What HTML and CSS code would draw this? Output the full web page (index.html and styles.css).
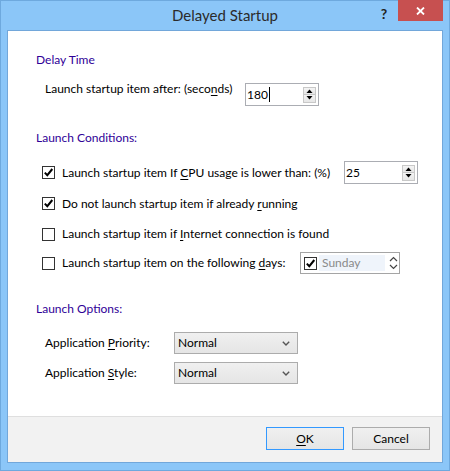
FILE: index.html
```html
<!DOCTYPE html>
<html>
<head>
<meta charset="utf-8">
<title>Delayed Startup</title>
<link rel="stylesheet" href="styles.css">
</head>
<body>
<div class="window">
  <div class="titlebar">
    <div></div>
    <div class="title">Delayed Startup</div>
    <div class="controls">
      <span class="help">?</span>
      <span class="close"><svg width="9" height="8" viewBox="0 0 9 8"><path d="M1 0.5 L8 7.5 M8 0.5 L1 7.5" stroke="#fff" stroke-width="1.8" fill="none"/></svg></span>
    </div>
  </div>
  <div class="client">
    <div class="content">
      <div class="heading">Delay Time</div>
      <div class="delay-row">
        <span class="label delay-label">Launch startup item after: (seco<u>n</u>ds)</span>
        <div class="spin">
          <span class="value">180<span class="caret"></span></span>
          <span class="spin-btns">
            <span class="sbtn"><svg width="7" height="4" viewBox="0 0 7 4"><path d="M0.5 4 L3.5 0.5 L6.5 4 Z" fill="#000"/></svg></span>
            <span class="sbtn"><svg width="7" height="4" viewBox="0 0 7 4"><path d="M0.5 0 L3.5 3.5 L6.5 0 Z" fill="#000"/></svg></span>
          </span>
        </div>
      </div>

      <div class="heading heading-cond">Launch Conditions:</div>
      <div class="conditions">
        <div class="crow">
          <span class="check-item cpu-item">
            <span class="cbox"><svg width="11" height="11" viewBox="0 0 11 11"><path d="M1.8 5.6 L4.3 8.2 L9.3 2" stroke="#000" stroke-width="2" fill="none"/></svg></span>
            <span class="label">Launch startup item If <u>C</u>PU usage is lower than: (%)</span>
          </span>
          <div class="spin">
            <span class="value">25</span>
            <span class="spin-btns">
              <span class="sbtn"><svg width="7" height="4" viewBox="0 0 7 4"><path d="M0.5 4 L3.5 0.5 L6.5 4 Z" fill="#000"/></svg></span>
              <span class="sbtn"><svg width="7" height="4" viewBox="0 0 7 4"><path d="M0.5 0 L3.5 3.5 L6.5 0 Z" fill="#000"/></svg></span>
            </span>
          </div>
        </div>
        <div class="crow">
          <span class="check-item">
            <span class="cbox"><svg width="11" height="11" viewBox="0 0 11 11"><path d="M1.8 5.6 L4.3 8.2 L9.3 2" stroke="#000" stroke-width="2" fill="none"/></svg></span>
            <span class="label">Do not launch startup item if already <u>r</u>unning</span>
          </span>
        </div>
        <div class="crow">
          <span class="check-item">
            <span class="cbox"></span>
            <span class="label">Launch startup item if <u>I</u>nternet connection is found</span>
          </span>
        </div>
        <div class="crow">
          <span class="check-item days-item">
            <span class="cbox"></span>
            <span class="label">Launch startup item on the following <u>d</u>ays:</span>
          </span>
          <div class="days">
            <span class="cbox small"><svg width="11" height="11" viewBox="0 0 11 11"><path d="M1.8 5.6 L4.3 8.2 L9.3 2" stroke="#000" stroke-width="2" fill="none"/></svg></span>
            <span class="day-name">Sunday</span>
            <span class="chev"><svg width="9" height="14" viewBox="0 0 9 14"><path d="M1 5 L4.5 1.5 L8 5 M1 9 L4.5 12.5 L8 9" stroke="#444" stroke-width="1.2" fill="none"/></svg></span>
          </div>
        </div>
      </div>

      <div class="heading heading-opt">Launch Options:</div>
      <div class="options">
        <span class="label">Application <u>P</u>riority:</span>
        <div class="combo"><span>Normal</span><svg width="8" height="5" viewBox="0 0 8 5"><path d="M0.8 0.8 L4 4 L7.2 0.8" stroke="#555" stroke-width="1.4" fill="none"/></svg></div>
        <span class="label">Application <u>S</u>tyle:</span>
        <div class="combo"><span>Normal</span><svg width="8" height="5" viewBox="0 0 8 5"><path d="M0.8 0.8 L4 4 L7.2 0.8" stroke="#555" stroke-width="1.4" fill="none"/></svg></div>
      </div>
    </div>
    <div class="footer">
      <button class="btn default"><u>O</u>K</button>
      <button class="btn">Cancel</button>
    </div>
  </div>
</div>
</body>
</html>
```

FILE: styles.css
```css
* { box-sizing: border-box; }
html, body { margin: 0; padding: 0; background: #fff; }
body { font-family: Lato, "Noto Sans", sans-serif; font-size: 12px; color: #000; }

.window {
  width: 450px;
  height: 471px;
  border: 1px solid #6ea9de;
  background: #8bc6f8;
  padding: 0 6px 7px 6px;
  display: flex;
  flex-direction: column;
}

.titlebar {
  height: 29px;
  flex: none;
  display: grid;
  grid-template-columns: 1fr auto 1fr;
}
.title {
  font-size: 15px;
  color: #2b2b2b;
  line-height: 29px;
}
.controls {
  justify-self: end;
  display: flex;
  align-items: flex-start;
}
.help {
  width: 26px;
  height: 22px;
  display: flex;
  align-items: center;
  justify-content: center;
  font-weight: bold;
  font-size: 14px;
  color: #222;
  padding-top: 2px;
  padding-right: 2px;
}
.close {
  margin-top: -1px;
  width: 45px;
  height: 21px;
  background: #c75050;
  display: flex;
  align-items: center;
  justify-content: center;
}

.client {
  flex: 1;
  border: 1px solid #72a7da;
  background: #fff;
  display: flex;
  flex-direction: column;
}
.content {
  flex: 1;
  padding: 21px 0 0 28px;
}
.heading {
  color: #2f0097;
  line-height: 16px;
}
.label { line-height: 16px; white-space: nowrap; }
u { text-decoration-thickness: 1px; text-underline-offset: 2px; }

.delay-row {
  margin-top: 12px;
  margin-left: 9px;
  display: flex;
  align-items: flex-start;
  height: 26px;
}
.delay-label { width: 200px; flex: none; padding-top: 1px; }
.delay-row .spin { margin-top: 3px; }

.spin {
  width: 74px;
  height: 23px;
  border: 1px solid #abadb3;
  display: flex;
  align-items: center;
  padding: 0 1px 0 1px;
  background: #fff;
  flex: none;
}
.value {
  flex: 1;
  display: flex;
  align-items: center;
  line-height: 16px;
}
.caret {
  display: inline-block;
  width: 1px;
  height: 15px;
  background: #000;
  margin-left: 1px;
}
.spin-btns {
  display: flex;
  flex-direction: column;
  width: 13px;
  margin-right: 1px;
}
.sbtn {
  height: 8px;
  border: 1px solid #c8c8c8;
  background: linear-gradient(#f4f4f4, #e6e6e6);
  display: flex;
  align-items: center;
  justify-content: center;
}
.sbtn + .sbtn { border-top: none; height: 8px; }

.heading-cond { margin-top: 24px; }
.conditions {
  margin-top: 11px;
  margin-left: 6px;
  display: grid;
  grid-template-rows: 31px 31px 30px 28px;
}
.crow {
  display: flex;
  align-items: center;
}
.check-item {
  display: flex;
  align-items: center;
  gap: 7px;
  flex: none;
}
.cpu-item { width: 302px; }
.days-item { width: 258px; }
.cbox {
  width: 13px;
  height: 13px;
  border: 1px solid #333;
  background: #fff;
  display: flex;
  align-items: center;
  justify-content: center;
  flex: none;
}

.days {
  width: 100px;
  height: 22px;
  border: 1px solid #a5a5a5;
  display: flex;
  align-items: center;
  padding: 0 0 0 3px;
  flex: none;
}
.day-name {
  margin-left: 2px;
  flex: none;
  width: 66px;
  height: 16px;
  line-height: 16px;
  background: #eff4fb;
  color: #8a8a8a;
  padding-left: 3px;
}
.chev {
  margin-left: 4px;
  display: flex;
  align-items: center;
}

.heading-opt { margin-top: 24px; }
.options {
  margin-top: 11px;
  margin-left: 9px;
  display: grid;
  grid-template-columns: 129px 124px;
  grid-auto-rows: 30px;
  align-items: center;
}
.combo {
  height: 22px;
  border: 1px solid #acacac;
  background: linear-gradient(#f0f0f0, #e5e5e5);
  display: flex;
  align-items: center;
  justify-content: space-between;
  padding: 0 7px 0 3px;
  line-height: 16px;
}

.footer {
  flex: none;
  height: 46px;
  border-top: 1px solid #dfdfdf;
  background: #f2f2f2;
  display: flex;
  justify-content: flex-end;
  align-items: flex-start;
  gap: 8px;
  padding: 10px 12px 0 0;
}
.btn {
  width: 78px;
  height: 23px;
  border: 1px solid #acacac;
  background: linear-gradient(#f0f0f0, #e5e5e5);
  font-family: Lato, "Noto Sans", sans-serif;
  font-size: 12px;
  color: #000;
  padding: 0;
  line-height: 16px;
}
.btn.default { border-color: #3399ff; }
```
